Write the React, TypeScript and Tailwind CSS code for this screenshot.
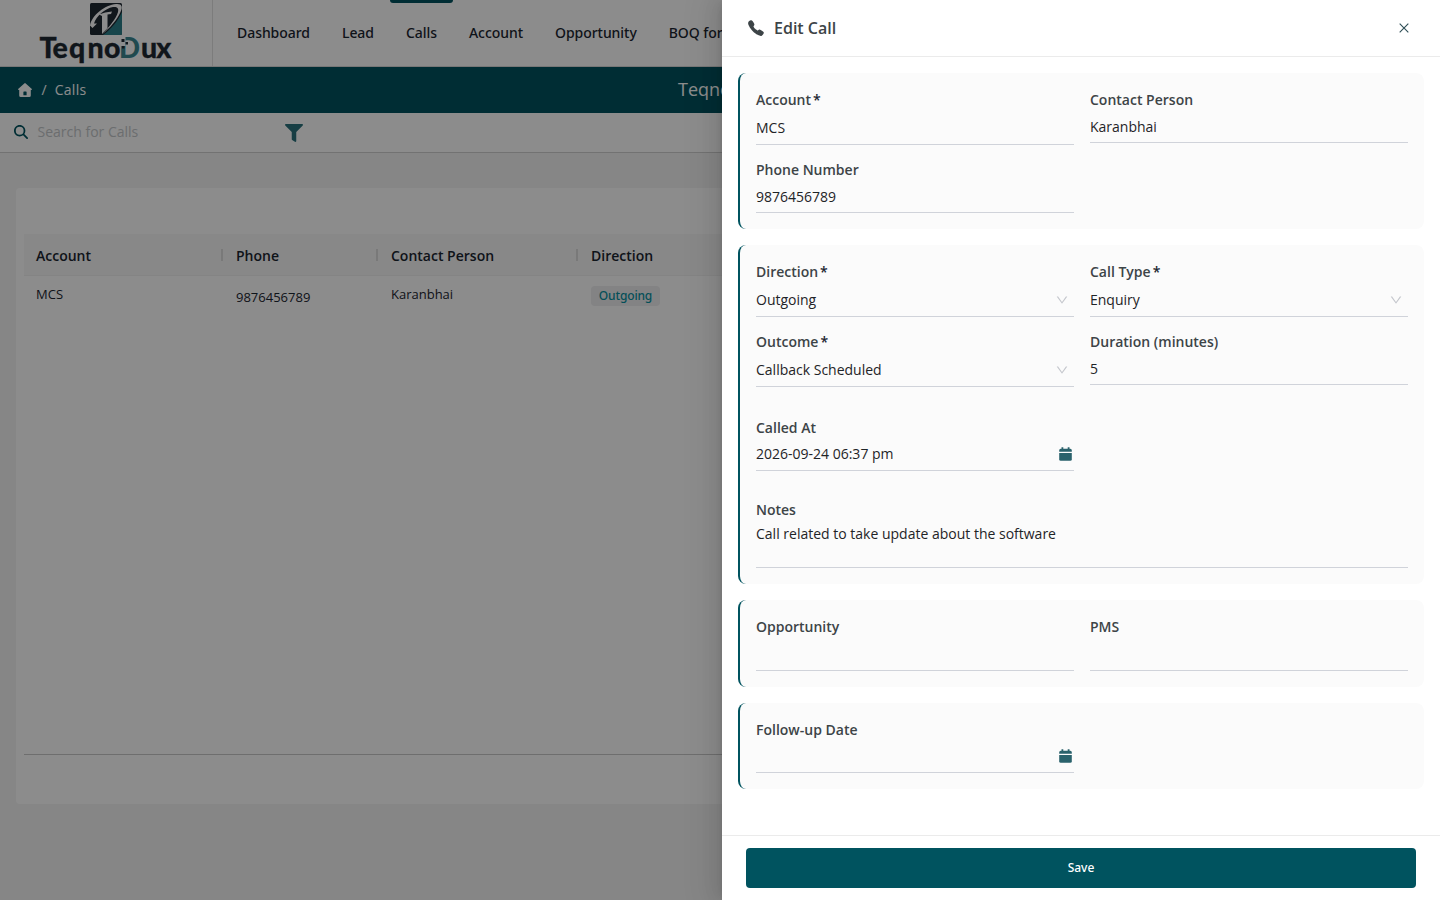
import React from 'react';
import { FaFilter } from 'react-icons/fa';
import { FaMagnifyingGlass } from 'react-icons/fa6';
import { IoCall } from 'react-icons/io5';
import { AiOutlineClose, AiOutlineDown } from 'react-icons/ai';

const navItems = ['Dashboard', 'Lead', 'Calls', 'Account', 'Opportunity', 'BOQ form'];

const Logo: React.FC = () => (
    <svg width="134" height="64" viewBox="0 0 134 64" className="block">
        <rect x="51" y="2" width="32" height="32" rx="1.5" fill="#1e2832" />
        <path d="M64 34 C72 28 79 20 83 11 V32.5 Q83 34 81.5 34 Z" fill="#2a7f89" />
        <path d="M60 13.500 Q66 11 73 10.500 L72 13 Q70 13 68.500 13.500 V27 L63 33 V15 Z" fill="#fff" />
        <path d="M51 24.500 C53 14 66 4 77 3 C83 2.500 84 6 81.500 11 C78 19 71 27 63 33.500 C70 26 77 18 79 11 C80 7 78 5.500 74 6 C66 7.500 57 15 55 22.500 L58 22.500 L53.500 27 Z" fill="#fff" />
        <g fontFamily="Lato, sans-serif" fontWeight="900" fontSize="28.5" strokeWidth="0.3">
            <text x="0.500 13.500 30 48.500 65" y="56.500" fill="#1e2832" stroke="#1e2832">Teqno</text>
            <text x="80" y="56.500" textLength="21" lengthAdjust="spacingAndGlyphs" fill="#3b8791">D</text>
            <text x="102 117.300" y="56.500" fill="#1e2832" stroke="#1e2832">ux</text>
        </g>
        <path d="M81 35h5.500v10h-5.500z" fill="#fff" />
        <path d="M82.500 38h3v3h-3zM86.500 41h2.500v2.500h-2.500zM83 45h2.500v2.500h-2.500z" fill="#1e2832" />
    </svg>
);

const HomeIcon: React.FC = () => (
    <svg width="14" height="14" viewBox="0 0 14 14" fill="currentColor">
        <path
            fillRule="evenodd"
            d="M6.300.4a1 1 0 0 1 1.400 0L13.600 5.800c.5.600.2 1.200-.5 1.200H12.800v5.200A1.600 1.600 0 0 1 11.200 13.900H2.800A1.600 1.600 0 0 1 1.200 12.200V7H.9C.2 7-.1 6.400.4 5.800ZM5.400 9v3.200h3.200V9q0-.6-.6-.6H6q-.6 0-.6.6Z"
        />
    </svg>
);

const CalendarIcon: React.FC = () => (
    <svg width="13" height="14" viewBox="0 0 13 14" className="mt-[1px] mr-[2px]" fill="#2a626c">
        <path d="M2.500 0.300h1.800v1.400h4.400V.3h1.800v1.400h.8q1.500 0 1.500 1.500v1.500H.2V3.200q0-1.500 1.500-1.500h.8Z" />
        <path d="M.2 6h12.600v6.200q0 1.500-1.500 1.500H1.700Q.2 13.700.2 12.200Z" />
    </svg>
);

const PageHeader: React.FC = () => (
    <header className="flex h-[67px] border-b border-[#d9d9d9] bg-white">
        <div className="flex w-[213px] shrink-0 justify-center border-r border-[#e2e2e2] pt-[1px]">
            <Logo />
        </div>
        <nav className="flex pl-2">
            {navItems.map((item) => (
                <div
                    key={item}
                    className="relative shrink-0 px-4 pt-[22px] font-['Noto_Sans',sans-serif] text-sm leading-[22px] font-medium tracking-[-0.05px] whitespace-nowrap text-[#1b2530]"
                >
                    {item === 'Calls' && <span className="absolute inset-x-0 top-0 h-[3px] rounded-b-sm bg-[#00535f]" />}
                    {item}
                </div>
            ))}
        </nav>
    </header>
);

const columns = [
    { title: 'Account', width: 'w-[200px]' },
    { title: 'Phone', width: 'w-[155px]' },
    { title: 'Contact Person', width: 'w-[200px]' },
    { title: 'Direction', width: 'w-[200px]' },
];

const CallsTable: React.FC = () => (
    <div className="mx-4 mt-[35px] flex h-[616px] flex-col rounded bg-white px-2 pt-[46px]">
        <div className="flex h-[42px] items-center border-b border-[#f0f0f0] bg-[#f7f7f7] text-sm font-semibold text-[#1b2530]">
            {columns.map(({ title, width }) => (
                <div key={title} className={`${width} flex shrink-0 items-center justify-between pl-3`}>
                    <span className="pt-0.5">{title}</span>
                    <span className="mr-[1px] h-3 w-[2px] bg-[#dcdcdc]" />
                </div>
            ))}
        </div>
        <div className="flex h-[479px] border-b border-[#c8c8c8] pt-2 text-[13px] leading-5 text-[#1b2530]">
            <div className="w-[200px] shrink-0 pl-3">MCS</div>
            <div className="w-[155px] shrink-0 pt-[3px] pl-3">9876456789</div>
            <div className="w-[200px] shrink-0 pl-3">Karanbhai</div>
            <div className="w-[200px] shrink-0 pt-0.5 pl-3">
                <span className="flex h-5 w-[69px] items-center justify-center rounded bg-[#eeeef0] font-['Noto_Sans',sans-serif] text-xs font-medium tracking-[-0.15px] text-[#0891a1]">
                    Outgoing
                </span>
            </div>
        </div>
    </div>
);

interface FieldProps {
    label: string;
    value?: string;
    required?: boolean;
    type?: 'input' | 'lookup' | 'select' | 'date' | 'empty' | 'textarea';
    className?: string;
}

const boxStyles = {
    input: 'h-8 items-center',
    lookup: 'h-[34px] items-center',
    select: 'h-[34px] items-center',
    date: 'h-8 items-center pb-0.5',
    empty: 'h-[33px] items-center',
    textarea: 'h-[47px] items-start pt-[3px]',
};

const Field: React.FC<FieldProps> = ({ label, value, required, type = 'input', className = '' }) => (
    <div className={className}>
        <div className="flex h-[22px] items-center gap-[2px] text-sm font-semibold whitespace-nowrap text-[#3d4447]">
            {label}
            {required && <span className="text-[#1b2530]">*</span>}
        </div>
        <div className={`${boxStyles[type]} flex justify-between border-b border-[#d0d3da] text-sm text-[#1f2427]`}>
            <span className="whitespace-nowrap">{value}</span>
            {type === 'select' && <AiOutlineDown className="mr-[5px] h-3.5 w-3.5 text-[#c4c6cc]" />}
            {type === 'date' && <CalendarIcon />}
        </div>
    </div>
);

const Section: React.FC<{ children: React.ReactNode }> = ({ children }) => (
    <section className="grid grid-cols-2 items-start gap-x-4 gap-y-3.5 rounded-lg border-l-2 border-[#00535f] bg-[#fbfbfb] p-4">
        {children}
    </section>
);

const EditCallDrawer: React.FC = () => (
    <aside className="absolute inset-y-0 right-0 flex w-[718px] flex-col bg-white shadow-[-6px_0_16px_0_rgba(0,0,0,0.08),-3px_0_6px_-4px_rgba(0,0,0,0.12),-9px_0_28px_8px_rgba(0,0,0,0.05)]">
        <div className="flex h-[57px] shrink-0 items-center border-b border-[#ebebeb] pr-[29px] pl-[25px] text-[#3d4447]">
            <IoCall className="h-[18px] w-[18px]" />
            <h2 className="ml-[9px] flex-1 text-base font-semibold">Edit Call</h2>
            <AiOutlineClose className="h-3.5 w-3.5 text-[#2f4f57]" />
        </div>

        <div className="flex flex-1 flex-col gap-4 p-4">
            <Section>
                <Field label="Account" value="MCS" required type="lookup" />
                <Field label="Contact Person" value="Karanbhai" />
                <Field label="Phone Number" value="9876456789" />
            </Section>
            <Section>
                <Field label="Direction" value="Outgoing" required type="select" />
                <Field label="Call Type" value="Enquiry" required type="select" />
                <Field label="Outcome" value="Callback Scheduled" required type="select" />
                <Field label="Duration (minutes)" value="5" />
                <Field label="Called At" value="2026-09-24 06:37 pm" type="date" className="mt-4" />
                <Field label="Notes" value="Call related to take update about the software" type="textarea" className="col-span-2 mt-3.5" />
            </Section>
            <Section>
                <Field label="Opportunity" type="empty" />
                <Field label="PMS" type="empty" />
            </Section>
            <Section>
                <Field label="Follow-up Date" type="date" />
            </Section>
        </div>

        <div className="h-[65px] shrink-0 border-t border-[#ebebeb] px-6 pt-3">
            <button className="h-10 w-full rounded bg-[#00535f] font-['Noto_Sans',sans-serif] text-xs font-medium text-white">Save</button>
        </div>
    </aside>
);

const App: React.FC = () => (
    <div className="relative h-[900px] w-[1440px] overflow-hidden bg-[#f5f5f5] font-['Open_Sans',sans-serif]">
        <PageHeader />
        <div className="flex h-[46px] items-center bg-[#00535f] text-sm text-white">
            <div className="flex w-[678px] items-center pl-[18px]">
                <HomeIcon />
                <span className="ml-[9.5px]">/</span>
                <span className="ml-2 tracking-[0.3px]">Calls</span>
            </div>
            <span className="pb-[2px] text-lg">TeqnoDux</span>
        </div>
        <div className="flex h-10 items-center border-b border-[#d0d0d0] bg-white pl-3.5">
            <FaMagnifyingGlass className="mb-[1px] h-3.5 w-3.5 text-[#00535f]" />
            <span className="mb-[2px] ml-[9.5px] w-[246.5px] text-sm text-[#c4c7ca]">Search for Calls</span>
            <FaFilter className="h-[18px] w-5 text-[#2a727c]" />
        </div>
        <CallsTable />

        <div className="absolute inset-0 bg-black/45" />
        <EditCallDrawer />
    </div>
);

export default App;
